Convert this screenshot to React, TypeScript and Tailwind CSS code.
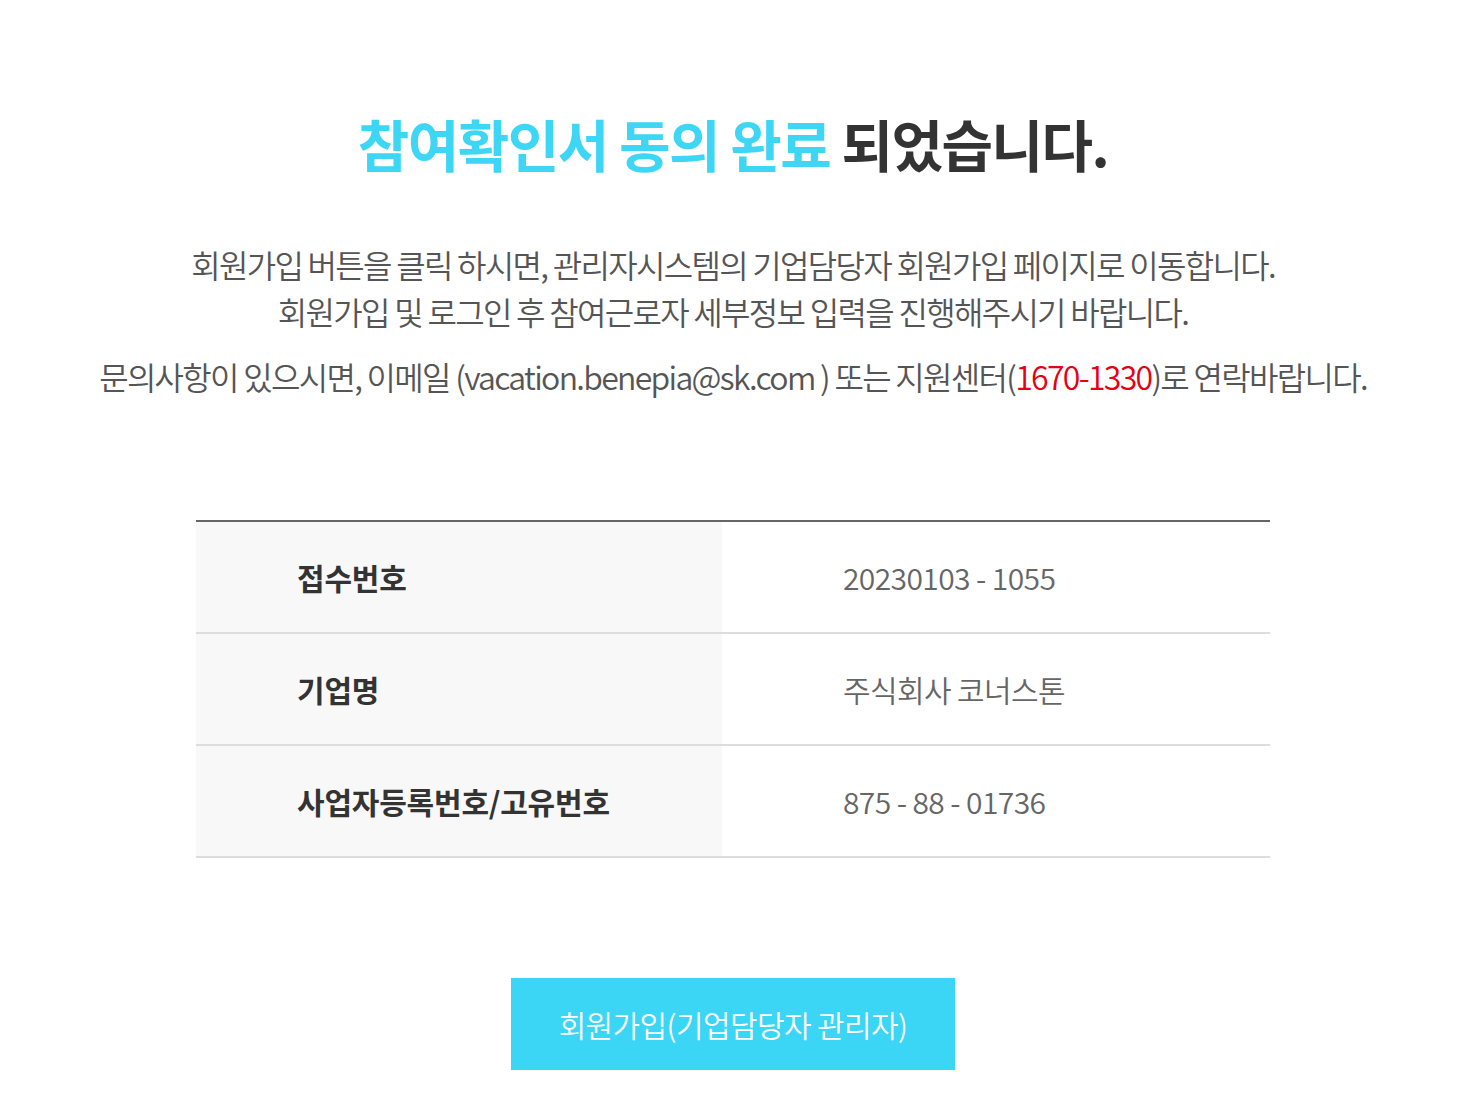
const rows = [
  { label: '접수번호', value: '20230103 - 1055' },
  { label: '기업명', value: '주식회사 코너스톤' },
  { label: '사업자등록번호/고유번호', value: '875 - 88 - 01736' },
];

export default function App() {
  return (
    <div className="min-h-screen bg-white pr-[18px] font-['Noto_Sans_CJK_KR','Noto_Sans',sans-serif]">
      <div className="pt-[107px] text-center">
        <h1 className="text-[56px] leading-[72px] font-bold tracking-[-1.5px] text-[#333]">
          <span className="text-[#3dd6f5]">참여확인서 동의 완료</span> 되었습니다.
        </h1>

        <div className="mt-[62px] text-[32px] leading-[47px] font-[350] tracking-[-1.7px] text-[#555]">
          <p>회원가입 버튼을 클릭 하시면, 관리자시스템의 기업담당자 회원가입 페이지로 이동합니다.</p>
          <p>회원가입 및 로그인 후 참여근로자 세부정보 입력을 진행해주시기 바랍니다.</p>
          <p className="mt-[18px]">
            문의사항이 있으시면, 이메일 (vacation.benepia@sk.com ) 또는 지원센터(
            <span className="text-[#e60012]">1670-1330</span>)로 연락바랍니다.
          </p>
        </div>
      </div>

      <div className="mx-auto mt-[120px] w-[1074px] border-t-2 border-[#666]">
        {rows.map((row) => (
          <div key={row.label} className="flex h-[112px] border-b-2 border-[#ddd]">
            <div className="flex w-[526px] items-center bg-[#f8f8f8] pl-[101px] text-[30px] font-bold tracking-[-0.2px] text-[#333]">
              {row.label}
            </div>
            <div className="flex flex-1 items-center pl-[121px] text-[30px] font-[350] tracking-[-0.6px] text-[#666]">
              {row.value}
            </div>
          </div>
        ))}
      </div>

      <div className="flex justify-center pt-[120px] pb-[36px]">
        <button className="h-[92px] w-[444px] bg-[#3bd5f5] text-[30px] font-[350] tracking-[-0.6px] text-white">
          회원가입(기업담당자 관리자)
        </button>
      </div>
    </div>
  );
}
